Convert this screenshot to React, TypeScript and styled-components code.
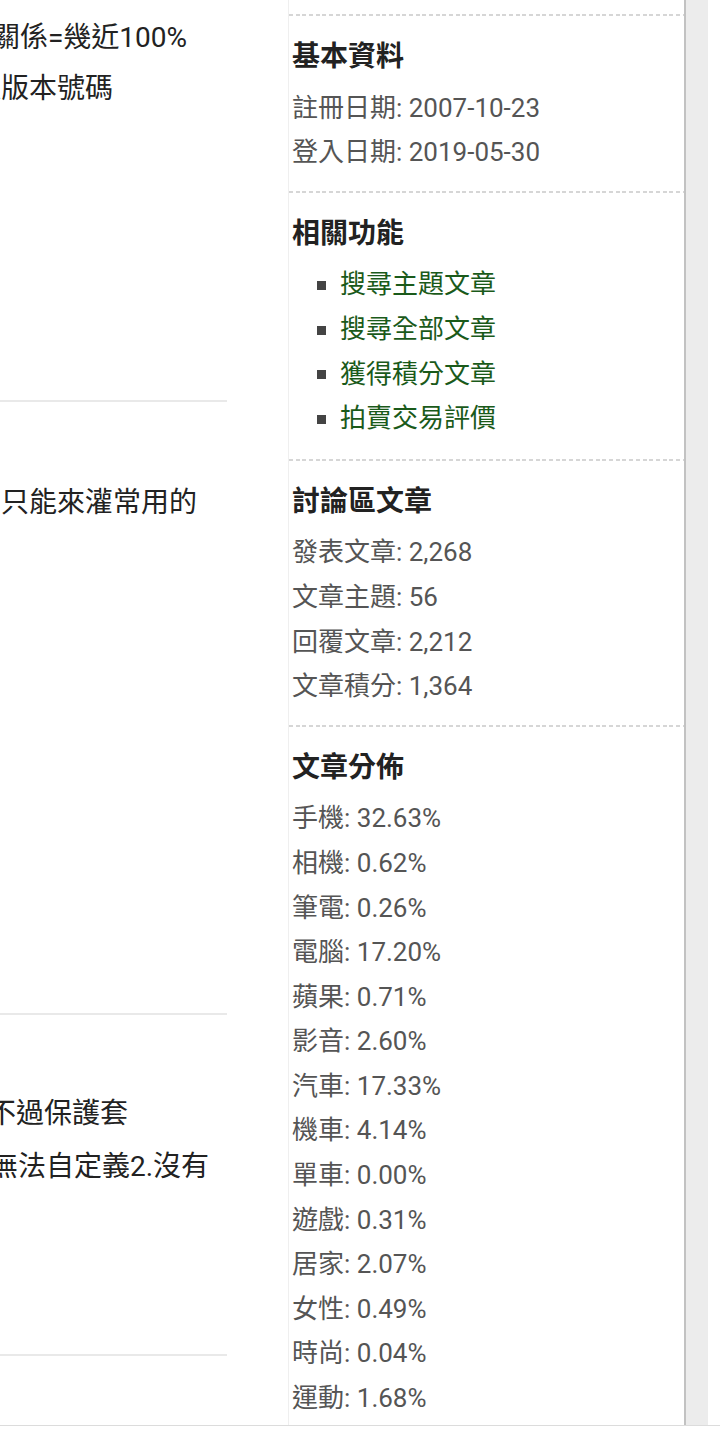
import React from "react";
import styled, { createGlobalStyle } from "styled-components";

const GlobalStyle = createGlobalStyle`
  html, body {
    margin: 0;
    padding: 0;
    background: #ffffff;
  }
  body {
    font-family: Roboto, "Noto Sans CJK TC", "Noto Sans", sans-serif;
    -webkit-font-smoothing: antialiased;
  }
`;

const Page = styled.div`
  display: flex;
  width: 720px;
  border-bottom: 1px solid #dcdcdc;
  font-family: Roboto, "Noto Sans CJK TC", sans-serif;
`;

const Main = styled.main`
  flex: 0 0 227px;
  margin-right: 61px;
  overflow: hidden;
  display: flex;
  flex-direction: column;
`;

const Post = styled.article<{ $pad: number; $height?: number; $lh: number; $last?: boolean }>`
  box-sizing: border-box;
  padding-top: ${(p) => p.$pad}px;
  height: ${(p) => (p.$height ? `${p.$height}px` : "auto")};
  border-bottom: ${(p) => (p.$last ? "none" : "2px solid #e9e9e9")};
  font-size: 28px;
  line-height: ${(p) => p.$lh}px;
  color: #222;
`;

const Line = styled.p<{ $indent: number }>`
  margin: 0 0 0 ${(p) => p.$indent}px;
  white-space: nowrap;
`;

const Sidebar = styled.aside`
  flex: 0 0 396px;
  box-sizing: border-box;
  border-left: 1px solid #efefef;
  padding-top: 14px;
`;

const Section = styled.section`
  padding: 21px 0 16px 3px;
  background: repeating-linear-gradient(
      90deg,
      #d6d6d6 0 4px,
      transparent 4px 6.67px
    )
    top left / 100% 2px no-repeat;
  &:last-child {
    padding-bottom: 4px;
  }
`;

const Heading = styled.h3`
  margin: 0 0 6px;
  font-size: 28px;
  line-height: 44.6px;
  font-weight: 700;
  color: #222;
`;

const Row = styled.div`
  font-size: 26px;
  line-height: 44.6px;
  color: #555;
  white-space: nowrap;
`;

const LinkList = styled.ul`
  list-style: none;
  margin: 0 0 2px;
  padding: 0 0 0 25px;
`;

const LinkItem = styled.li`
  display: flex;
  align-items: center;
  font-size: 26px;
  line-height: 44.6px;
  &::before {
    content: "";
    flex: none;
    width: 9px;
    height: 9px;
    margin-right: 14px;
    margin-top: 2px;
    background: #444;
  }
`;

const Link = styled.a`
  color: #1a5a1a;
  text-decoration: none;
`;

const EdgeLine = styled.div`
  flex: 0 0 2px;
  background: #c2c2c2;
`;

const Gutter = styled.div`
  flex: 0 0 22px;
  background: #ececec;
`;

const links = ["搜尋主題文章", "搜尋全部文章", "獲得積分文章", "拍賣交易評價"];

const stats = [
  "發表文章: 2,268",
  "文章主題: 56",
  "回覆文章: 2,212",
  "文章積分: 1,364",
];

const dist = [
  ["手機", "32.63%"],
  ["相機", "0.62%"],
  ["筆電", "0.26%"],
  ["電腦", "17.20%"],
  ["蘋果", "0.71%"],
  ["影音", "2.60%"],
  ["汽車", "17.33%"],
  ["機車", "4.14%"],
  ["單車", "0.00%"],
  ["遊戲", "0.31%"],
  ["居家", "2.07%"],
  ["女性", "0.49%"],
  ["時尚", "0.04%"],
  ["運動", "1.68%"],
];

export default function App() {
  return (
    <>
      <GlobalStyle />
      <Page>
        <Main>
          <Post $pad={12} $height={402} $lh={51}>
            <Line $indent={-8}>關係=幾近100%</Line>
            <Line $indent={-27}>以版本號碼</Line>
          </Post>
          <Post $pad={75} $height={613} $lh={52}>
            <Line $indent={1}>只能來灌常用的</Line>
          </Post>
          <Post $pad={72} $height={341} $lh={53}>
            <Line $indent={-12}>不過保護套</Line>
            <Line $indent={-10}>無法自定義2.沒有</Line>
          </Post>
          <Post $pad={0} $lh={52} $last />
        </Main>
        <Sidebar>
          <Section>
            <Heading>基本資料</Heading>
            <Row>註冊日期: 2007-10-23</Row>
            <Row>登入日期: 2019-05-30</Row>
          </Section>
          <Section>
            <Heading>相關功能</Heading>
            <LinkList>
              {links.map((l) => (
                <LinkItem key={l}>
                  <Link href="#">{l}</Link>
                </LinkItem>
              ))}
            </LinkList>
          </Section>
          <Section>
            <Heading>討論區文章</Heading>
            {stats.map((s) => (
              <Row key={s}>{s}</Row>
            ))}
          </Section>
          <Section>
            <Heading>文章分佈</Heading>
            {dist.map(([k, v]) => (
              <Row key={k}>
                {k}: {v}
              </Row>
            ))}
          </Section>
        </Sidebar>
        <EdgeLine />
        <Gutter />
      </Page>
    </>
  );
}
